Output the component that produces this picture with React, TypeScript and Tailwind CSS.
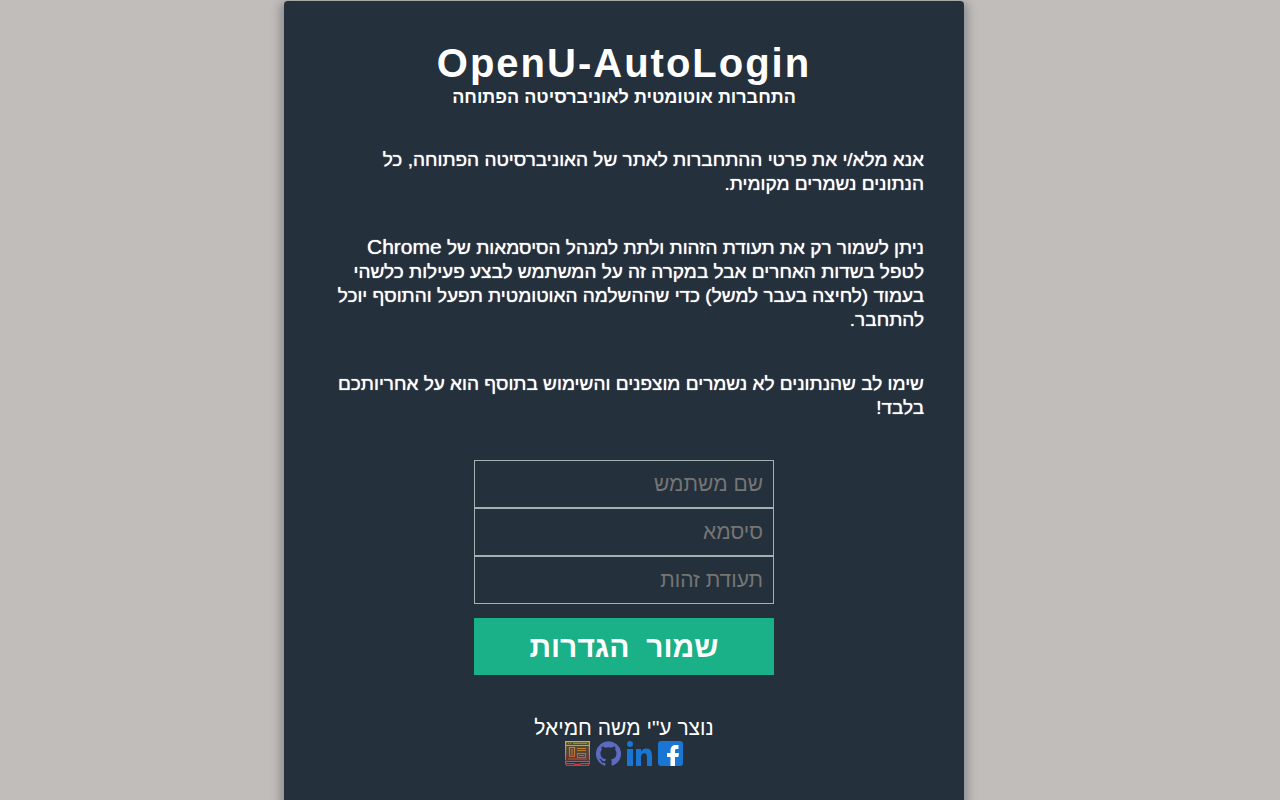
import React from "react";

const fields = [
  { id: "username", label: "שם משתמש", type: "text" },
  { id: "password", label: "סיסמא", type: "password" },
  { id: "identity", label: "תעודת זהות", type: "text" },
];

function SiteIcon() {
  return (
    <svg viewBox="0 0 25 25" className="size-[25px]" fill="none" stroke="url(#site)" strokeWidth="1.2">
      <defs>
        <linearGradient id="site" gradientUnits="userSpaceOnUse" x1="0" y1="0" x2="0" y2="25">
          <stop offset="0" stopColor="#e0b010" />
          <stop offset="0.5" stopColor="#d87a35" />
          <stop offset="1" stopColor="#d92c3c" />
        </linearGradient>
      </defs>
      <rect x="1" y="1" width="23" height="19" fill="url(#site)" fillOpacity=".25" stroke="none" />
      <path d="M.6 19.500V.6h23.800v18.900M1 4.500h23" />
      <path d="M3 2.500h1M5 2.500h1M8 2.500h14" opacity=".6" />
      <path d="M4.500 6.500h5v9h-5zM7 8v5M5.500 14h3M12 7.500h9M12 9.500h9M12.500 12.500h8v4h-8zM14 14.500h5M3 18h19" opacity=".8" />
      <path d="M.6 20.500h23.800v2l-1 1.900H1.600l-1-1.900zM1 22.500h8l1 .8h5l1-.8h8" />
    </svg>
  );
}

function GithubIcon() {
  return (
    <svg viewBox="0 0 24 24" className="size-[25px]" fill="#5c6bc0">
      <path d="M12 .3a12 12 0 0 0-3.8 23.4c.6.1.8-.3.8-.6v-2c-3.3.7-4-1.6-4-1.6-.6-1.4-1.4-1.8-1.4-1.8-1-.7.1-.7.1-.7 1.2 0 1.9 1.2 1.9 1.2 1 1.8 2.8 1.3 3.5 1 0-.8.4-1.3.7-1.6-2.7-.3-5.5-1.3-5.5-6 0-1.2.5-2.3 1.3-3.1-.2-.4-.6-1.6 0-3.2 0 0 1-.3 3.4 1.2a11.5 11.5 0 0 1 6 0c2.3-1.5 3.3-1.2 3.3-1.2.6 1.6.2 2.8 0 3.2.9.8 1.3 1.9 1.3 3.2 0 4.6-2.8 5.6-5.5 5.9.5.4.9 1 .9 2.2v3.3c0 .3.1.7.8.6A12 12 0 0 0 12 .3" />
    </svg>
  );
}

function LinkedinIcon() {
  return (
    <svg viewBox="0 0 25 25" className="size-[25px]" fill="#1976d2">
      <circle cx="3" cy="3" r="3" />
      <path d="M0 8h6v17H0zM9 8h5v2.5C15 8.8 17 7.6 19 7.6c5 0 6 3.4 6 8V25h-5v-8.5c0-2.2-.3-4.3-2.7-4.3S14 14.2 14 16.5V25H9z" />
    </svg>
  );
}

function FacebookIcon() {
  return (
    <svg viewBox="0 0 25 25" className="size-[25px]">
      <rect width="25" height="25" rx="3" fill="#1976d2" />
      <path fill="#fff" d="M12.5 25v-9H9v-4h3.5V9.5C12.5 6 14.5 4 18 4h2.5v4H19c-1.6 0-2 .6-2 2v2h4l-.6 4H17v9z" />
    </svg>
  );
}

const links = [
  { name: "Facebook", Icon: FacebookIcon },
  { name: "LinkedIn", Icon: LinkedinIcon },
  { name: "GitHub", Icon: GithubIcon },
  { name: "Website", Icon: SiteIcon },
];

export default function App() {
  return (
    <div
      dir="rtl"
      className="flex min-h-screen justify-center bg-[#c1bdba] pt-px pr-8 font-['Liberation_Sans',Arial,sans-serif] text-white"
    >
      <main className="w-full max-w-[680px] rounded-[4px] bg-[#24303b] p-10 shadow-[0_4px_10px_4px_rgba(19,35,47,0.3)]">
        <header className="text-center font-bold">
          <h1 dir="ltr" className="text-[40px] leading-11 tracking-wider">OpenU-AutoLogin</h1>
          <h2 className="mt-px text-[18px] leading-[22px]">התחברות אוטומטית לאוניברסיטה הפתוחה</h2>
        </header>
        <div className="mt-10 flex flex-col gap-10 text-[19px] leading-6 [text-shadow:0_0_1px_#fff]">
          <p>אנא מלא/י את פרטי ההתחברות לאתר של האוניברסיטה הפתוחה, כל הנתונים נשמרים מקומית.</p>
          <p>
            ניתן לשמור רק את תעודת הזהות ולתת למנהל הסיסמאות של{" "}
            <span lang="en" className="text-[21px] leading-none">Chrome</span> לטפל
            בשדות האחרים אבל במקרה זה על המשתמש לבצע פעילות כלשהי בעמוד (לחיצה בעבר למשל) כדי שההשלמה
            האוטומטית תפעל והתוסף יוכל להתחבר.
          </p>
          <p>שימו לב שהנתונים לא נשמרים מוצפנים והשימוש בתוסף הוא על אחריותכם בלבד!</p>
        </div>
        <form className="mx-auto mt-10 flex w-[300px] flex-col" onSubmit={(e) => e.preventDefault()}>
          {fields.map((f) => (
            <input
              key={f.id}
              id={f.id}
              type={f.type}
              aria-label={f.label}
              placeholder={f.label}
              className="h-12 w-full border border-[#a0b3b0] bg-transparent px-2.5 text-[21px] placeholder:text-[#757575]"
            />
          ))}
          <button type="submit" className="mt-3.5 h-[57px] bg-[#1ab188] text-[30px] font-bold">
            שמור&nbsp; הגדרות
          </button>
        </form>
        <footer className="mt-10 flex flex-col items-center text-[21px]">
          <p className="leading-[26px]">נוצר ע"י משה חמיאל</p>
          <nav className="flex gap-1.5">
            {links.map(({ name, Icon }) => (
              <a key={name} href="#" aria-label={name}>
                <Icon />
              </a>
            ))}
          </nav>
        </footer>
      </main>
    </div>
  );
}
